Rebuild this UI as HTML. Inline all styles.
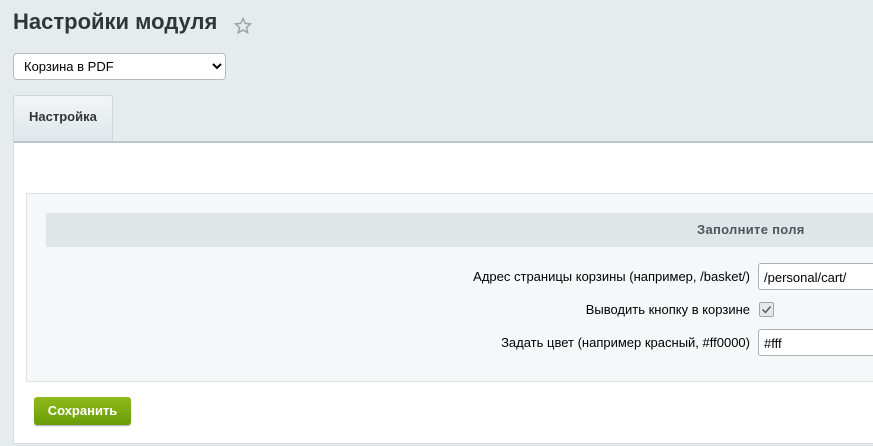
<!DOCTYPE html>
<html><head><meta charset="utf-8"><style>
body{margin:0;width:873px;height:446px;overflow:hidden;background:#e6ecee;font-family:"Liberation Sans",Arial,sans-serif;position:relative}
.a{position:absolute}
h1{position:absolute;left:13px;top:9px;margin:0;font-size:22px;font-weight:bold;color:#2e3639}
select{position:absolute;left:13px;top:53px;width:213px;height:27px;border:1px solid #b5bcbf;border-radius:4px;background:#fff;font:13px "Liberation Sans",sans-serif;color:#000;padding-left:6px}
.tab{left:13px;top:95px;width:100px;height:46px;background:linear-gradient(#f2f5f6,#e0e7ea);border:1px solid #cfd7da;border-bottom:none;border-radius:3px 3px 0 0;font-size:13px;font-weight:bold;color:#333;box-sizing:border-box;padding:13px 0 0 15px}
.panel{left:13px;top:141px;width:870px;height:300px;background:#fff;border-top:2px solid #bcc5c9;border-left:1px solid #d5dcdf;border-bottom:1px solid #d5dcdf}
.inner{left:26px;top:193px;width:860px;height:189px;background:#f5f8f9;border:1px solid #dce2e5;box-sizing:border-box}
.hdr{left:46px;top:213px;width:840px;height:34px;background:#e0e6e8;font-weight:bold;font-size:13px;color:#4b585d;line-height:33px}
.lbl{right:123px;font-size:13px;color:#000;text-align:right}
.inp{left:758px;width:130px;height:27px;border:1px solid #a9b3b7;border-radius:3px;background:#fff;box-sizing:border-box;font-size:13px;padding:6px 0 0 5px}
.btn{left:34px;top:397px;width:97px;height:28px;border-radius:3px;background:linear-gradient(#8fba1c,#6a9d07);color:#fff;font-weight:bold;font-size:13px;text-align:center;line-height:27px;box-shadow:0 1px 1px #aab}
</style></head><body>
<h1>Настройки модуля</h1>
<svg class="a" style="left:234px;top:17px" width="18" height="18" viewBox="0 0 18 18"><path d="M9 1.5l2.2 4.9 5.3.5-4 3.6 1.2 5.2L9 13l-4.7 2.7 1.2-5.2-4-3.6 5.3-.5z" fill="none" stroke="#9aa4a8" stroke-width="1.5"/></svg>
<select><option>Корзина в PDF</option></select>
<div class="a panel"></div>
<div class="a tab">Настройка</div>
<div class="a inner"></div>
<div class="a hdr"><span style="position:absolute;left:651px;letter-spacing:0.3px">Заполните поля</span></div>
<div class="a lbl" style="top:269px">Адрес страницы корзины (например, /basket/)</div>
<div class="a inp" style="top:263px">/personal/cart/</div>
<div class="a lbl" style="top:302px">Выводить кнопку в корзине</div>
<div class="a" style="left:759px;top:302px;width:13px;height:13px;border:1px solid #a0a8ac;border-radius:2px;background:#e4e8ea"><svg width="13" height="13" viewBox="0 0 13 13" style="display:block"><path d="M2.5 6.5l3 3 5-6" fill="none" stroke="#555" stroke-width="1.4"/></svg></div>
<div class="a lbl" style="top:335px">Задать цвет (например красный, #ff0000)</div>
<div class="a inp" style="top:329px">#fff</div>
<div class="a btn">Сохранить</div>
</body></html>
